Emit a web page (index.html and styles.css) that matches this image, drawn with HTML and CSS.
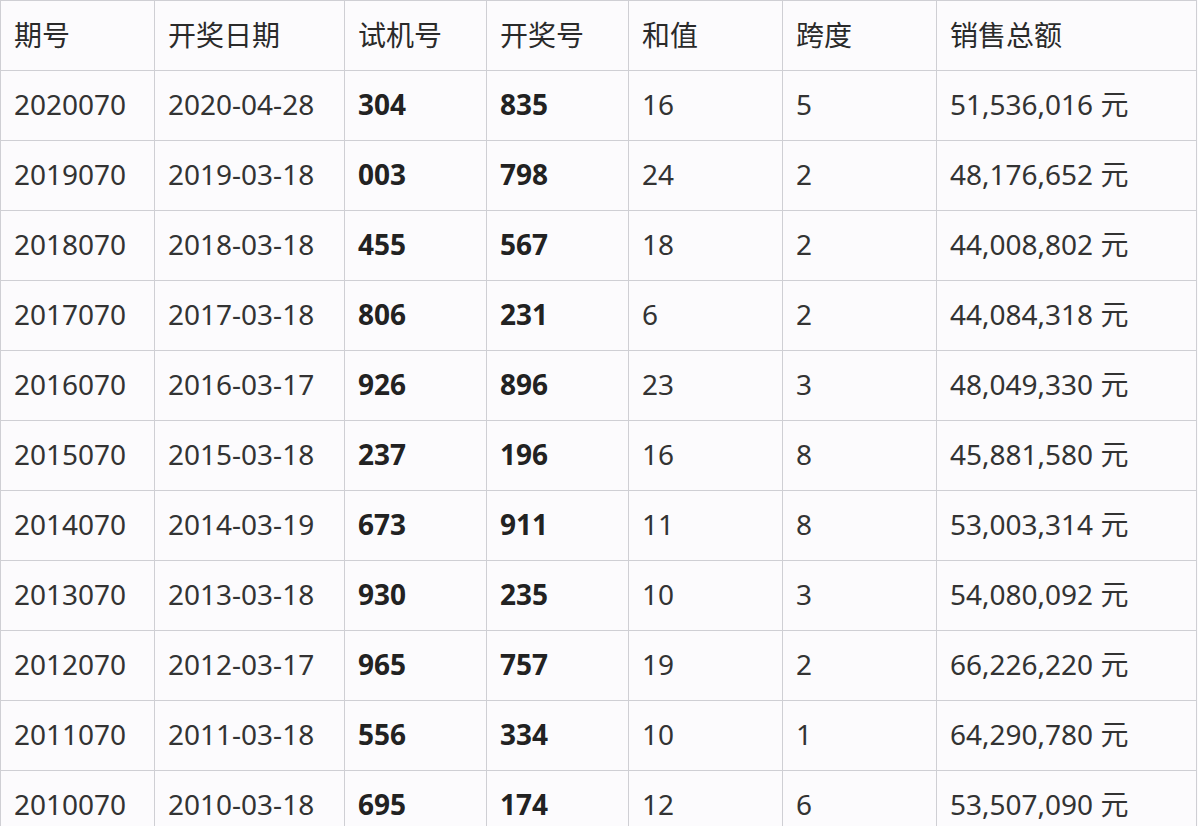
FILE: index.html
```html
<!DOCTYPE html>
<html lang="zh-CN">
<head>
<meta charset="utf-8">
<title>开奖数据</title>
<link rel="stylesheet" href="styles.css">
</head>
<body>
<div class="page">
<table class="draws">
  <colgroup>
    <col class="c-issue">
    <col class="c-date">
    <col class="c-test">
    <col class="c-win">
    <col class="c-sum">
    <col class="c-span">
    <col class="c-sales">
  </colgroup>
  <thead>
    <tr><th>期号</th><th>开奖日期</th><th>试机号</th><th>开奖号</th><th>和值</th><th>跨度</th><th>销售总额</th></tr>
  </thead>
  <tbody>
    <tr><td>2020070</td><td>2020-04-28</td><td class="b">304</td><td class="b">835</td><td>16</td><td>5</td><td>51,536,016 元</td></tr>
    <tr><td>2019070</td><td>2019-03-18</td><td class="b">003</td><td class="b">798</td><td>24</td><td>2</td><td>48,176,652 元</td></tr>
    <tr><td>2018070</td><td>2018-03-18</td><td class="b">455</td><td class="b">567</td><td>18</td><td>2</td><td>44,008,802 元</td></tr>
    <tr><td>2017070</td><td>2017-03-18</td><td class="b">806</td><td class="b">231</td><td>6</td><td>2</td><td>44,084,318 元</td></tr>
    <tr><td>2016070</td><td>2016-03-17</td><td class="b">926</td><td class="b">896</td><td>23</td><td>3</td><td>48,049,330 元</td></tr>
    <tr><td>2015070</td><td>2015-03-18</td><td class="b">237</td><td class="b">196</td><td>16</td><td>8</td><td>45,881,580 元</td></tr>
    <tr><td>2014070</td><td>2014-03-19</td><td class="b">673</td><td class="b">911</td><td>11</td><td>8</td><td>53,003,314 元</td></tr>
    <tr><td>2013070</td><td>2013-03-18</td><td class="b">930</td><td class="b">235</td><td>10</td><td>3</td><td>54,080,092 元</td></tr>
    <tr><td>2012070</td><td>2012-03-17</td><td class="b">965</td><td class="b">757</td><td>19</td><td>2</td><td>66,226,220 元</td></tr>
    <tr><td>2011070</td><td>2011-03-18</td><td class="b">556</td><td class="b">334</td><td>10</td><td>1</td><td>64,290,780 元</td></tr>
    <tr><td>2010070</td><td>2010-03-18</td><td class="b">695</td><td class="b">174</td><td>12</td><td>6</td><td>53,507,090 元</td></tr>
  </tbody>
</table>
</div>
</body>
</html>
```
FILE: styles.css
```css
html, body {
  margin: 0;
  padding: 0;
  background: #fcfbfd;
}
.page {
  width: 1198px;
  height: 826px;
  overflow: hidden;
}
.draws {
  border-collapse: collapse;
  table-layout: fixed;
  width: 1196px;
  font-family: "Noto Sans", "Noto Sans CJK SC", sans-serif;
  font-size: 28px;
  color: #333;
}
.c-issue { width: 154px; }
.c-date { width: 190px; }
.c-test { width: 142px; }
.c-win { width: 142px; }
.c-sum { width: 154px; }
.c-span { width: 154px; }
.c-sales { width: 260px; }
.draws th,
.draws td {
  border: 1px solid #cfcfd4;
  height: 66px;
  padding: 0 0 3px 13px;
  text-align: left;
  vertical-align: middle;
  white-space: nowrap;
  line-height: 1;
}
.draws th {
  font-weight: 400;
  color: #2a2a2a;
  font-family: "Noto Sans CJK SC", sans-serif;
}
.draws td.b {
  font-weight: 700;
  color: #222;
}
```
